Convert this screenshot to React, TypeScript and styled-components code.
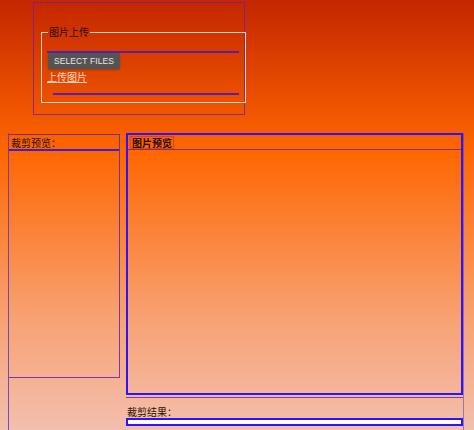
import React from "react";
import styled, { createGlobalStyle } from "styled-components";

const GlobalStyle = createGlobalStyle`
  html, body {
    margin: 0;
    padding: 0;
    min-height: 100%;
  }
  body {
    background: linear-gradient(
      to bottom,
      #c42600 0px,
      #ff6600 150px,
      #f8a274 320px,
      #f3bfae 430px
    );
    background-repeat: no-repeat;
    min-height: 430px;
    font-family: "Noto Sans CJK SC", "Noto Sans", sans-serif;
    font-size: 10px;
    color: #2a1200;
  }
`;

const Page = styled.div`
  width: 474px;
  height: 430px;
  overflow: hidden;
  display: flex;
  flex-direction: column;
`;

const UploadPanel = styled.div`
  box-sizing: border-box;
  width: 212px;
  height: 113px;
  margin: 2px 0 0 33px;
  padding: 0 0 0 7px;
  border: 1px solid rgba(110, 30, 170, 0.75);
`;

const Fieldset = styled.fieldset`
  box-sizing: border-box;
  width: 205px;
  margin: 22px 0 0 0;
  padding: 0 6px 7px 5px;
  border: 1px solid #f7d3c6;
`;

const Legend = styled.legend`
  padding: 0 1px;
  margin-left: 1px;
  font-size: 10px;
  line-height: 14px;
  color: #2a0c00;
`;

const Divider = styled.div<{ $indent?: number; $top?: number }>`
  height: 2px;
  margin-top: ${(p) => p.$top ?? 0}px;
  margin-left: ${(p) => p.$indent ?? 0}px;
  margin-right: 0;
  background: #5a1ea8;
`;

const SelectButton = styled.button`
  display: block;
  width: 72px;
  height: 16px;
  margin: 0 0 0 1px;
  padding: 0;
  border: none;
  border-radius: 2px;
  background: #545454;
  color: #e8e8e8;
  font-family: "Liberation Sans", Arial, sans-serif;
  font-size: 8.5px;
  font-weight: normal;
  letter-spacing: 0.1px;
  box-shadow: 0 1px 2px rgba(0, 0, 0, 0.25);
`;

const UploadLink = styled.a`
  display: inline-block;
  margin-top: 2px;
  font-size: 10px;
  line-height: 12px;
  color: #ffd9c8;
  text-decoration: underline;
`;

const Workspace = styled.div`
  display: flex;
  gap: 6px;
  margin-top: 18px;
  flex: 1;
`;

const LeftColumn = styled.div`
  box-sizing: border-box;
  width: 112px;
  margin-left: 8px;
  padding-top: 1px;
  border-left: 1px solid rgba(80, 50, 200, 0.8);
`;

const RightColumn = styled.div`
  box-sizing: border-box;
  width: 338px;
  border-right: 1px solid rgba(90, 60, 180, 0.55);
`;

const CropPreview = styled.div`
  box-sizing: border-box;
  height: 244px;
  border: 1px solid rgba(90, 40, 170, 0.85);
  border-left: none;
`;

const PanelHeader = styled.div<{ $line: string }>`
  height: 14px;
  border-bottom: ${(p) => p.$line};
  display: flex;
  align-items: flex-end;
`;

const HeaderText = styled.span`
  font-size: 10px;
  line-height: 12px;
  padding-left: 2px;
`;

const ImagePreview = styled.div`
  box-sizing: border-box;
  height: 262px;
  border: 2px solid #2c14ff;
`;

const PreviewTag = styled.span`
  margin: 1px 0 0 2px;
  padding: 0 1px;
  border: 1px solid rgba(220, 50, 50, 0.75);
  font-size: 10px;
  line-height: 11px;
  font-weight: bold;
  color: #2a0c00;
`;

const ResultSection = styled.div`
  margin-top: 2px;
  border-top: 1px solid rgba(90, 40, 170, 0.8);
  padding-top: 8px;
`;

const ResultLabel = styled.div`
  font-size: 10px;
  line-height: 12px;
  padding-left: 1px;
`;

const ResultBar = styled.div`
  height: 4px;
  border: 2px solid #2c14ff;
  background: #ffffff;
`;

export default function App() {
  return (
    <>
      <GlobalStyle />
      <Page>
        <UploadPanel>
          <Fieldset>
            <Legend>图片上传</Legend>
            <Divider $top={12} />
            <SelectButton>SELECT FILES</SelectButton>
            <UploadLink href="#">上传图片</UploadLink>
            <Divider $top={9} $indent={6} />
          </Fieldset>
        </UploadPanel>
        <Workspace>
          <LeftColumn>
            <CropPreview>
              <PanelHeader $line="2px solid #3a1ee0">
                <HeaderText>裁剪预览：</HeaderText>
              </PanelHeader>
            </CropPreview>
          </LeftColumn>
          <RightColumn>
            <ImagePreview>
              <PanelHeader $line="1px solid rgba(100, 40, 150, 0.8)">
                <PreviewTag>图片预览</PreviewTag>
              </PanelHeader>
            </ImagePreview>
            <ResultSection>
              <ResultLabel>裁剪结果：</ResultLabel>
              <ResultBar />
            </ResultSection>
          </RightColumn>
        </Workspace>
      </Page>
    </>
  );
}
